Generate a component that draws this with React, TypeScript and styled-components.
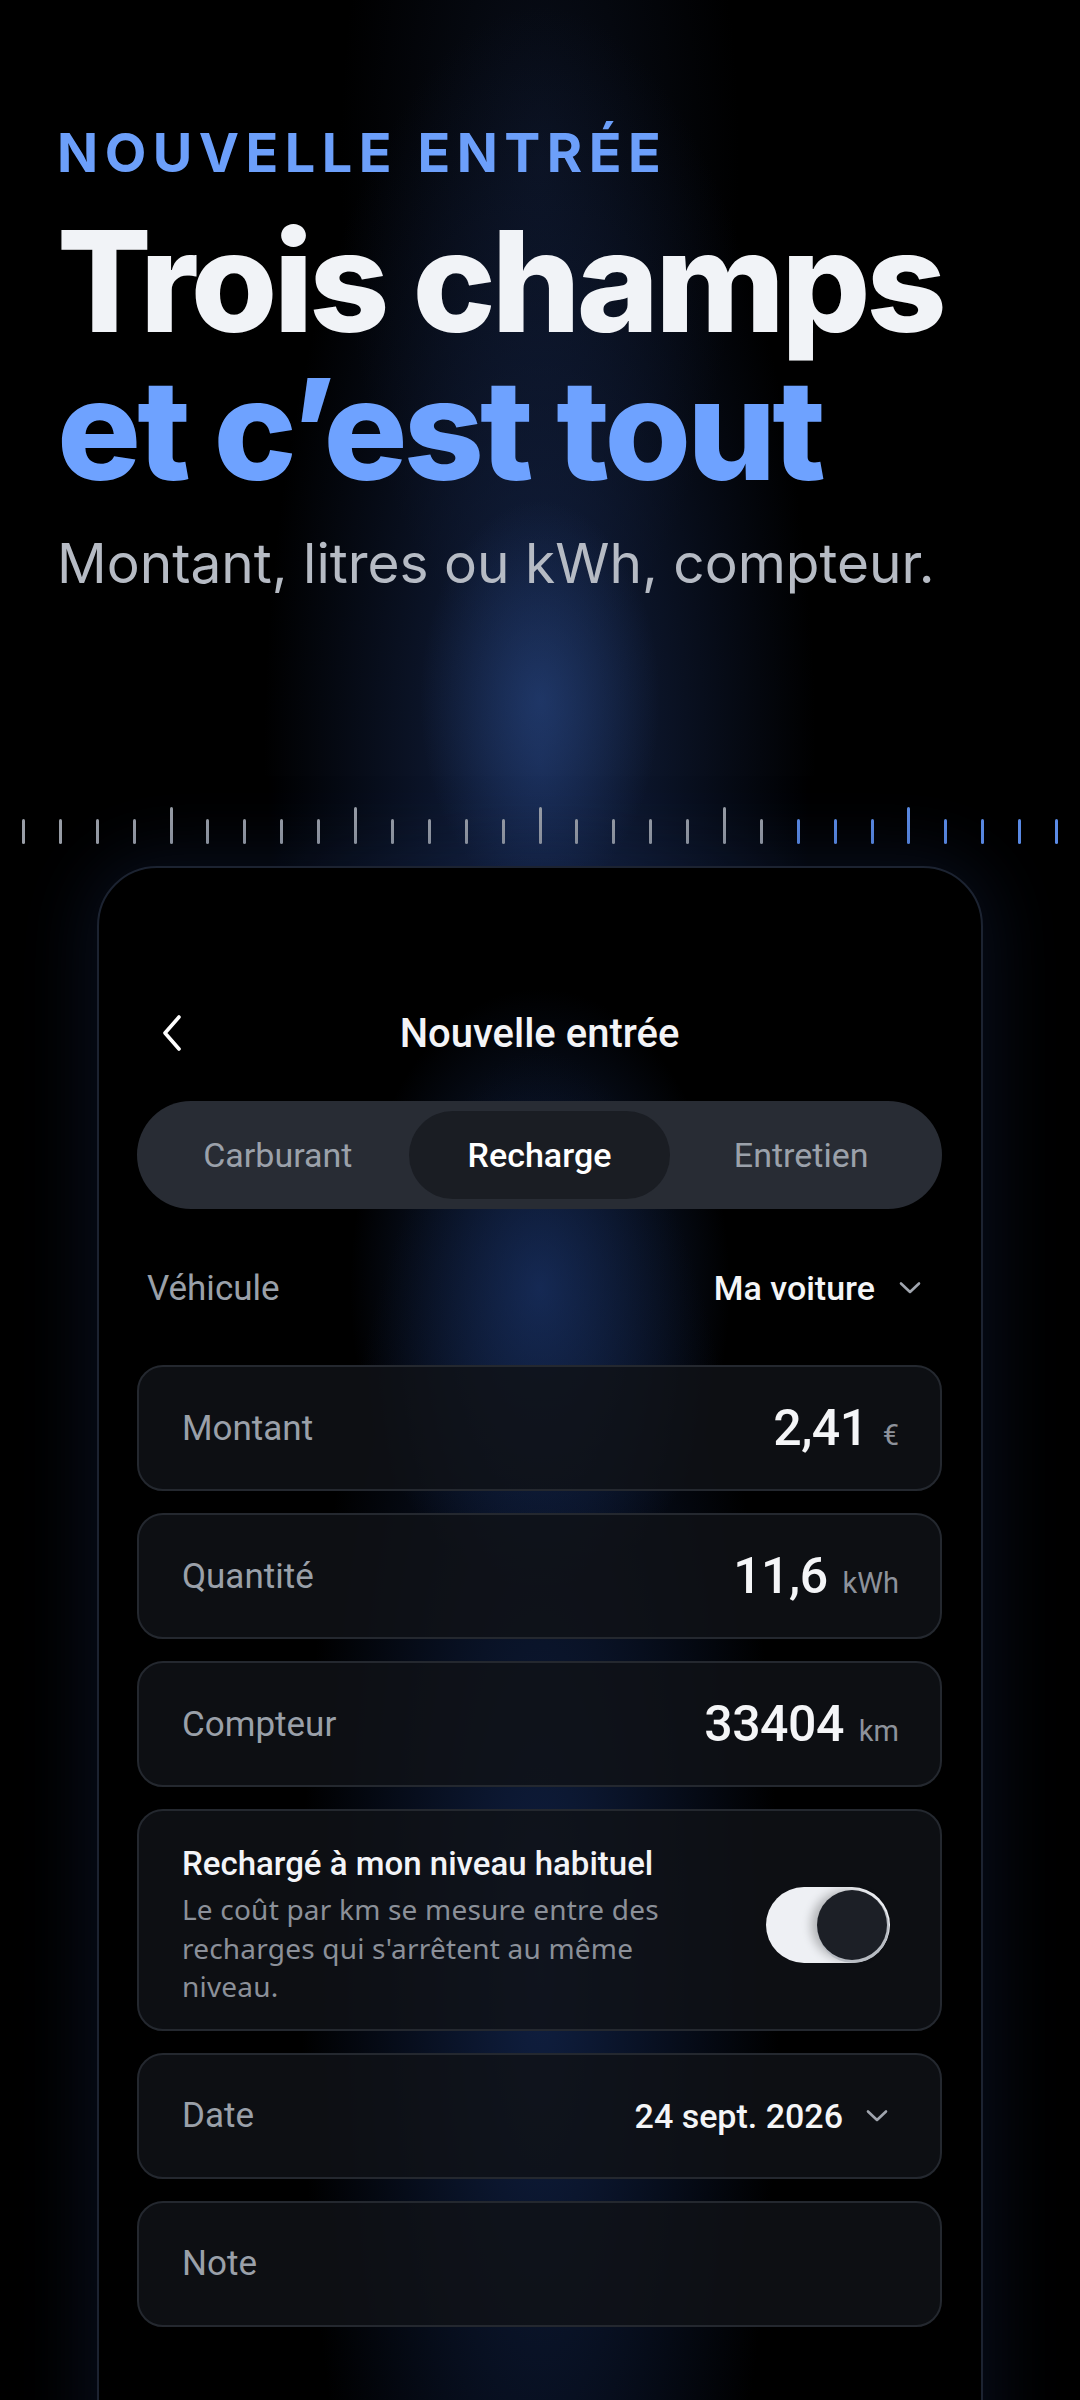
import styled, { createGlobalStyle } from "styled-components";

const GlobalStyle = createGlobalStyle`
  html, body {
    margin: 0;
    padding: 0;
    background: #000;
  }
  * {
    box-sizing: border-box;
  }
`;

const Page = styled.div`
  width: 1080px;
  height: 2400px;
  overflow: hidden;
  display: flex;
  flex-direction: column;
  background:
    radial-gradient(ellipse 120px 200px at 540px 700px, rgba(50, 88, 160, 0.4), transparent),
    radial-gradient(ellipse 300px 820px at 540px 760px, rgba(26, 46, 92, 0.75), transparent 92%),
    radial-gradient(ellipse 200px 500px at 540px 160px, rgba(20, 32, 60, 0.45), transparent),
    #000;
`;

const Hero = styled.header`
  padding: 121px 57px 0;
  font-family: Inter, "Liberation Sans", sans-serif;
`;

const Eyebrow = styled.div`
  font-size: 54px;
  line-height: 64px;
  font-weight: 700;
  letter-spacing: 0.12em;
  color: #6c9ffa;
`;

const Headline = styled.h1`
  margin: 22px 0 0;
  font-size: 140px;
  line-height: 148px;
  font-weight: 800;
  letter-spacing: -0.028em;
  color: #f1f3f7;
  span {
    color: #6ea2ff;
  }
`;

const Subtitle = styled.p`
  margin: 28px 0 0;
  font-size: 55px;
  line-height: 64px;
  font-weight: 400;
  color: #b6bbc4;
`;

const Ruler = styled.div`
  display: flex;
  justify-content: center;
  align-items: flex-end;
  gap: 33.9px;
  height: 37px;
  margin-top: 212px;
  flex-shrink: 0;
`;

const Tick = styled.span<{ $long: boolean; $blue: boolean }>`
  width: 3px;
  height: ${(p) => (p.$long ? 37 : 25)}px;
  border-radius: 2px;
  background: ${(p) => (p.$blue ? "#5b8be6" : "#999ea7")};
`;

const Card = styled.section`
  flex-shrink: 0;
  min-height: 1700px;
  margin: 22px 97px 0;
  padding: 125px 39px 0 38px;
  border: 2px solid #1c2331;
  border-radius: 60px;
  box-shadow: 0 0 70px 12px rgba(22, 40, 80, 0.35);
  background:
    radial-gradient(ellipse 190px 300px at 50% 420px, rgba(38, 74, 150, 0.5), transparent),
    radial-gradient(ellipse 260px 1000px at 50% 1100px, rgba(22, 44, 92, 0.7), transparent 92%),
    #000;
  font-family: Roboto, "Liberation Sans", sans-serif;
`;

const TopBar = styled.div`
  display: grid;
  grid-template-columns: 1fr auto 1fr;
  align-items: center;
  height: 80px;
`;

const BackButton = styled.button`
  justify-self: start;
  display: flex;
  background: none;
  border: 0;
  padding: 0 0 0 25px;
  cursor: pointer;
`;

const Title = styled.div`
  font-size: 40px;
  font-weight: 500;
  color: #f3f4f7;
`;

const Segmented = styled.div`
  margin-top: 28px;
  height: 108px;
  padding: 10px;
  border-radius: 54px;
  background: #282c34;
  display: grid;
  grid-template-columns: repeat(3, 1fr);
`;

const Segment = styled.div<{ $active?: boolean }>`
  display: flex;
  align-items: center;
  justify-content: center;
  border-radius: 44px;
  font-size: 34px;
  font-weight: ${(p) => (p.$active ? 500 : 400)};
  color: ${(p) => (p.$active ? "#ffffff" : "#9ba1aa")};
  background: ${(p) => (p.$active ? "#1a1d23" : "transparent")};
`;

const VehicleRow = styled.div`
  margin: 39px 0 37px;
  height: 80px;
  padding: 0 21px 0 10px;
  display: flex;
  align-items: center;
  justify-content: space-between;
`;

const Label = styled.span`
  font-size: 35px;
  font-weight: 400;
  color: #9aa0a9;
`;

const Picker = styled.div<{ $gap: number }>`
  display: flex;
  align-items: center;
  gap: ${(p) => p.$gap}px;
  font-size: 34px;
  font-weight: 500;
  color: #f4f5f7;
`;

const Fields = styled.div`
  display: flex;
  flex-direction: column;
  gap: 22px;
`;

const Field = styled.div<{ $padRight: number }>`
  height: 126px;
  border: 2px solid #24282f;
  border-radius: 26px;
  background: rgba(16, 18, 23, 0.84);
  display: flex;
  align-items: center;
  justify-content: space-between;
  padding: 0 ${(p) => p.$padRight}px 0 43px;
`;

const ValueGroup = styled.div`
  display: flex;
  align-items: baseline;
  gap: 15px;
`;

const Value = styled.span`
  font-size: 50px;
  font-weight: 500;
  letter-spacing: -0.5px;
  color: #f4f5f7;
`;

const Unit = styled.span`
  font-size: 29px;
  color: #8d929b;
`;

const ToggleCard = styled.div`
  border: 2px solid #24282f;
  border-radius: 26px;
  background: rgba(16, 18, 23, 0.84);
  display: flex;
  align-items: center;
  gap: 44px;
  padding: 33px 50px 23px 43px;
`;

const ToggleText = styled.div`
  flex: 1;
  max-width: 530px;
`;

const ToggleTitle = styled.div`
  font-size: 33px;
  line-height: 40px;
  font-weight: 500;
  color: #f3f4f7;
`;

const ToggleHint = styled.p`
  margin: 6px 0 0;
  font-family: "Noto Sans", "Open Sans", sans-serif;
  font-size: 28px;
  line-height: 38.5px;
  letter-spacing: 0.2px;
  color: #8b9099;
`;

const Switch = styled.div<{ $on: boolean }>`
  flex-shrink: 0;
  margin-left: auto;
  width: 124px;
  height: 76px;
  border-radius: 38px;
  background: #eef0f4;
  padding: 3px;
  display: flex;
  justify-content: ${(p) => (p.$on ? "flex-end" : "flex-start")};
`;

const Knob = styled.span`
  width: 70px;
  height: 70px;
  border-radius: 50%;
  background: #1c1f26;
  box-shadow: 1px 2px 0 1px #b7bbc2, -6px 0 10px rgba(0, 0, 0, 0.25);
`;

const Chevron = () => (
  <svg width="22" height="14" viewBox="0 0 22 14" fill="none">
    <path d="M2 2.5 L11 11 L20 2.5" stroke="#a0a5ae" strokeWidth="2.6" strokeLinecap="round" strokeLinejoin="round" />
  </svg>
);

const ticks = Array.from({ length: 29 }, (_, i) => i - 14);

const ValueField = (props: { label: string; value: string; unit: string }) => (
  <Field $padRight={41}>
    <Label>{props.label}</Label>
    <ValueGroup>
      <Value>{props.value}</Value>
      <Unit>{props.unit}</Unit>
    </ValueGroup>
  </Field>
);

export default function App() {
  return (
    <Page>
      <GlobalStyle />
      <Hero>
        <Eyebrow>NOUVELLE ENTRÉE</Eyebrow>
        <Headline>
          Trois champs
          <br />
          <span>et c’est tout</span>
        </Headline>
        <Subtitle>Montant, litres ou kWh, compteur.</Subtitle>
      </Hero>

      <Ruler>
        {ticks.map((k) => (
          <Tick key={k} $long={k % 5 === 0} $blue={k >= 7} />
        ))}
      </Ruler>

      <Card>
        <TopBar>
          <BackButton aria-label="Retour">
            <svg width="20" height="38" viewBox="0 0 20 38" fill="none">
              <path d="M17 3 L3 19 L17 35" stroke="#ffffff" strokeWidth="3.6" strokeLinecap="round" strokeLinejoin="round" />
            </svg>
          </BackButton>
          <Title>Nouvelle entrée</Title>
          <span />
        </TopBar>

        <Segmented>
          <Segment>Carburant</Segment>
          <Segment $active>Recharge</Segment>
          <Segment>Entretien</Segment>
        </Segmented>

        <VehicleRow>
          <Label>Véhicule</Label>
          <Picker $gap={24}>
            Ma voiture
            <Chevron />
          </Picker>
        </VehicleRow>

        <Fields>
          <ValueField label="Montant" value="2,41" unit="€" />
          <ValueField label="Quantité" value="11,6" unit="kWh" />
          <ValueField label="Compteur" value="33404" unit="km" />

          <ToggleCard>
            <ToggleText>
              <ToggleTitle>Rechargé à mon niveau habituel</ToggleTitle>
              <ToggleHint>
                Le coût par km se mesure entre des recharges qui s'arrêtent au même niveau.
              </ToggleHint>
            </ToggleText>
            <Switch $on>
              <Knob />
            </Switch>
          </ToggleCard>

          <Field $padRight={52}>
            <Label>Date</Label>
            <Picker $gap={23}>
              24 sept. 2026
              <Chevron />
            </Picker>
          </Field>

          <Field $padRight={52}>
            <Label>Note</Label>
          </Field>
        </Fields>
      </Card>
    </Page>
  );
}
